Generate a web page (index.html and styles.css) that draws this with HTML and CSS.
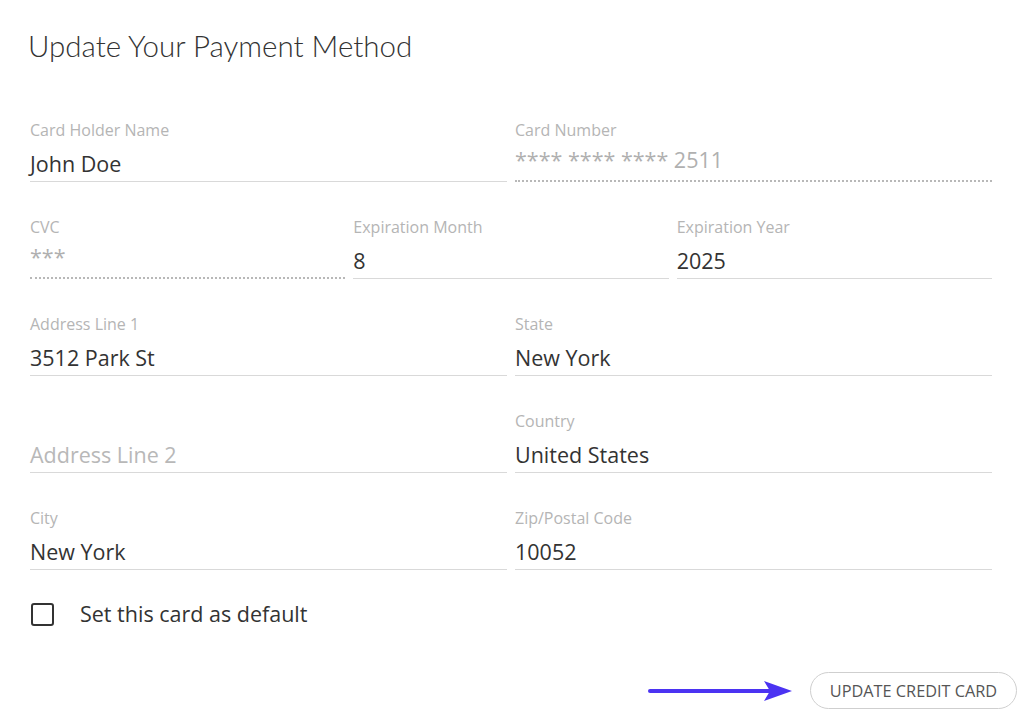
FILE: index.html
```html
<!DOCTYPE html>
<html>
<head>
<meta charset="utf-8">
<link rel="stylesheet" href="styles.css">
</head>
<body>
<div class="page">
  <h1 class="title">Update Your Payment Method</h1>
  <form class="form">
    <div class="row">
      <div class="field">
        <div class="label">Card Holder Name</div>
        <div class="value">John Doe</div>
      </div>
      <div class="field disabled">
        <div class="label">Card Number</div>
        <div class="value">**** **** **** 2511</div>
      </div>
    </div>
    <div class="row">
      <div class="field disabled">
        <div class="label">CVC</div>
        <div class="value">***</div>
      </div>
      <div class="field">
        <div class="label">Expiration Month</div>
        <div class="value">8</div>
      </div>
      <div class="field">
        <div class="label">Expiration Year</div>
        <div class="value">2025</div>
      </div>
    </div>
    <div class="row">
      <div class="field">
        <div class="label">Address Line 1</div>
        <div class="value">3512 Park St</div>
      </div>
      <div class="field">
        <div class="label">State</div>
        <div class="value">New York</div>
      </div>
    </div>
    <div class="row">
      <div class="field">
        <div class="label">&nbsp;</div>
        <div class="value placeholder">Address Line 2</div>
      </div>
      <div class="field">
        <div class="label">Country</div>
        <div class="value">United States</div>
      </div>
    </div>
    <div class="row">
      <div class="field">
        <div class="label">City</div>
        <div class="value">New York</div>
      </div>
      <div class="field">
        <div class="label">Zip/Postal Code</div>
        <div class="value">10052</div>
      </div>
    </div>
    <label class="check">
      <span class="box"></span>
      <span class="check-text">Set this card as default</span>
    </label>
    <div class="actions">
      <svg class="arrow" width="146" height="24" viewBox="0 0 146 24">
        <line x1="2" y1="12" x2="125" y2="12" stroke="#4b33f2" stroke-width="4" stroke-linecap="round"/>
        <path d="M116 2 L144 12 L116 22 L122 12 Z" fill="#4b33f2"/>
      </svg>
      <button type="button" class="btn">UPDATE CREDIT CARD</button>
    </div>
  </form>
</div>
</body>
</html>
```
FILE: styles.css
```css
html, body {
  margin: 0;
  padding: 0;
  background: #fff;
}
body {
  font-family: "Open Sans", "Liberation Sans", sans-serif;
  color: #333;
}
.page {
  padding: 26px 32px 0 30px;
}
.title {
  margin: 0 0 0 -2px;
  font-family: Lato, "Open Sans", sans-serif;
  font-weight: 300;
  font-size: 29.5px;
  line-height: 40px;
  color: #333;
  letter-spacing: 0;
}
.form {
  margin-top: 54px;
}
.row {
  display: flex;
  gap: 8px;
  margin-bottom: 35px;
}
.field {
  flex: 1;
  min-width: 0;
}
.label {
  font-size: 16px;
  line-height: 20px;
  color: #b5b5b5;
  height: 20px;
}
.value {
  margin-top: 10px;
  font-size: 21.5px;
  line-height: 28px;
  padding-bottom: 3px;
  border-bottom: 1px solid #d9d9d9;
  color: #333;
  white-space: nowrap;
}
.value.placeholder {
  color: #b8b8b8;
}
.disabled .value {
  color: #b0b0b0;
  margin-top: 6px;
  padding-bottom: 6px;
  border-bottom: 2px dotted #b8b8b8;
}
.check {
  display: flex;
  align-items: center;
  gap: 26px;
  margin-top: -5px;
  margin-left: 1px;
}
.box {
  width: 19px;
  height: 19px;
  border: 2px solid #333;
  border-radius: 3px;
}
.check-text {
  font-size: 21.5px;
  line-height: 28px;
  color: #333;
}
.actions {
  display: flex;
  justify-content: flex-end;
  align-items: center;
  gap: 16px;
  margin-top: 44px;
  margin-right: -25px;
}
.arrow {
  display: block;
}
.btn {
  font-family: "Open Sans", "Liberation Sans", sans-serif;
  font-size: 16.3px;
  color: #555;
  background: #fff;
  border: 1px solid #cfcfcf;
  border-radius: 19px;
  height: 37px;
  width: 207px;
  padding: 0;
  letter-spacing: 0;
}
```
